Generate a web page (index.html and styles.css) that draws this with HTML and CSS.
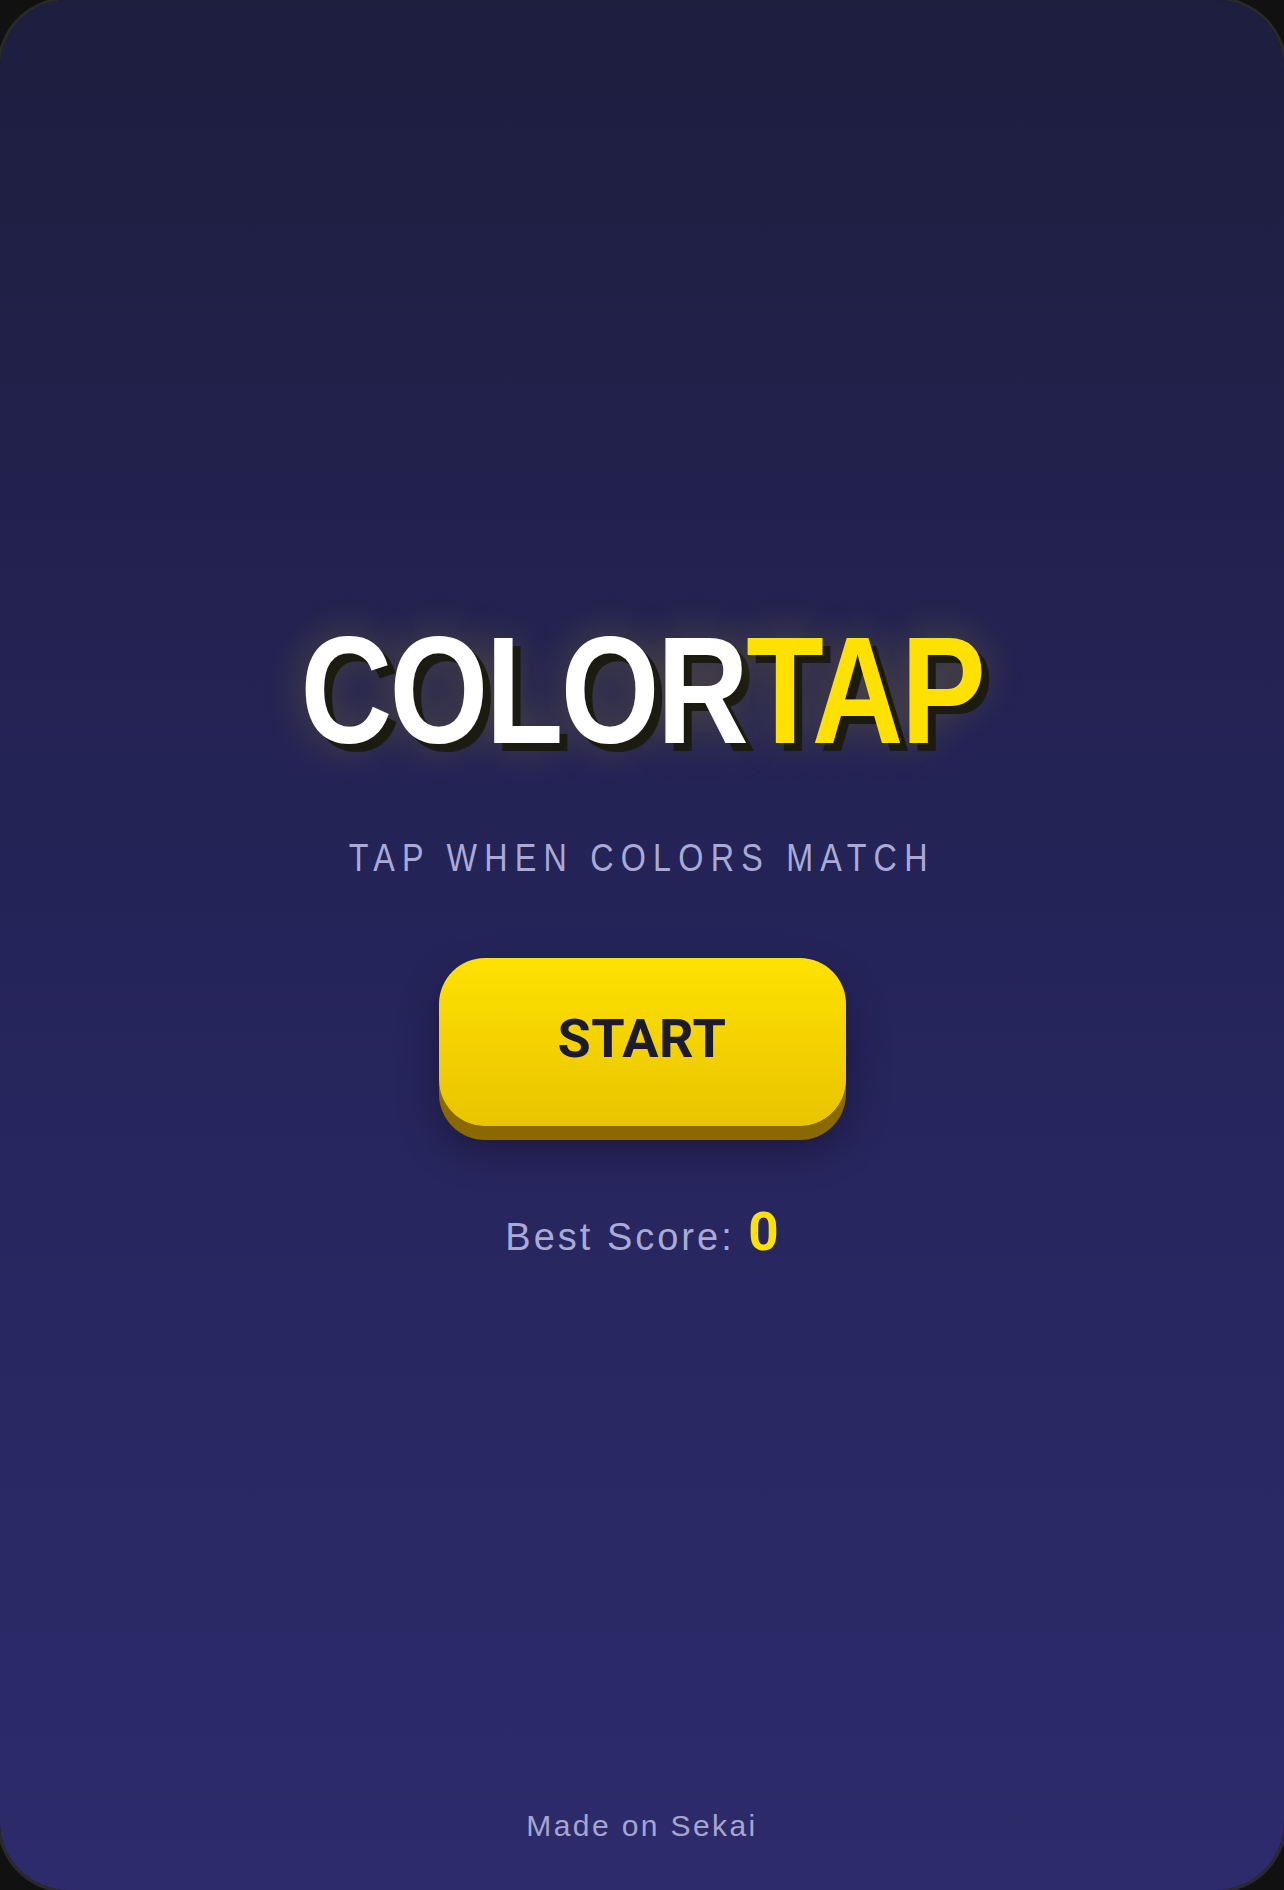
FILE: index.html
```html
<!DOCTYPE html>
<html lang="en">
<head>
<meta charset="utf-8">
<title>ColorTap</title>
<link rel="stylesheet" href="styles.css">
</head>
<body>
<div class="app">
  <div class="spacer"></div>
  <main class="menu">
    <h1 class="title"><span class="title-white">COLOR</span><span class="title-yellow">TAP</span></h1>
    <p class="subtitle">TAP WHEN COLORS MATCH</p>
    <button class="start-btn" type="button"><span class="start-label">START</span></button>
    <p class="best">Best Score: <span class="best-value">0</span></p>
  </main>
  <footer class="footer">Made on Sekai</footer>
</div>
</body>
</html>
```

FILE: styles.css
```css
html, body {
  margin: 0;
  padding: 0;
  background: #111111;
}

.app {
  box-sizing: border-box;
  width: 1284px;
  height: 1890px;
  border-radius: 68px;
  box-shadow: 0 0 0 3px #2a2a2a;
  overflow: hidden;
  background: linear-gradient(180deg, #1e1e3f 0%, #25245a 50%, #2d2b6b 100%);
  display: grid;
  grid-template-rows: 1fr auto 1fr;
  font-family: "Liberation Sans", Arial, sans-serif;
}

.menu {
  display: flex;
  flex-direction: column;
  align-items: center;
  margin-bottom: 18px;
}

.title {
  margin: 0;
  font-weight: 700;
  font-size: 152px;
  line-height: 1;
  letter-spacing: -3px;
  transform: scaleX(0.835);
  text-shadow: 9.5px 8px 0 #1c1b12, 0 0 44px rgba(255, 224, 0, 0.26);
}

.title-white { color: #ffffff; }
.title-yellow { color: #ffe100; }

.subtitle {
  margin: 73px 0 0 0;
  font-size: 38px;
  line-height: 1;
  letter-spacing: 8.5px;
  transform: scaleX(0.85);
  color: #a9aad6;
}

.start-btn {
  margin-top: 81px;
  width: 407px;
  height: 168px;
  border: none;
  border-radius: 46px;
  background: linear-gradient(180deg, #ffe100 0%, #e8c400 100%);
  box-shadow: 0 14px 0 #8a6a00, 0 22px 40px rgba(0, 0, 0, 0.35);
  padding: 0;
  display: flex;
  align-items: center;
  justify-content: center;
}

.start-label {
  font-family: Roboto, "Liberation Sans", Arial, sans-serif;
  font-weight: 700;
  font-size: 54px;
  line-height: 1;
  letter-spacing: 0.5px;
  color: #1b1b30;
  margin-top: -6px;
}

.best {
  margin: 80px 0 0 0;
  font-size: 38px;
  line-height: 1;
  letter-spacing: 3px;
  color: #a9aad6;
}

.best-value {
  font-family: Roboto, "Liberation Sans", Arial, sans-serif;
  font-size: 53px;
  font-weight: 700;
  letter-spacing: 0;
  color: #ffe100;
}

.footer {
  align-self: end;
  justify-self: center;
  padding-bottom: 49px;
  font-size: 30px;
  line-height: 1;
  letter-spacing: 2.4px;
  color: #a5a6d0;
}
```
